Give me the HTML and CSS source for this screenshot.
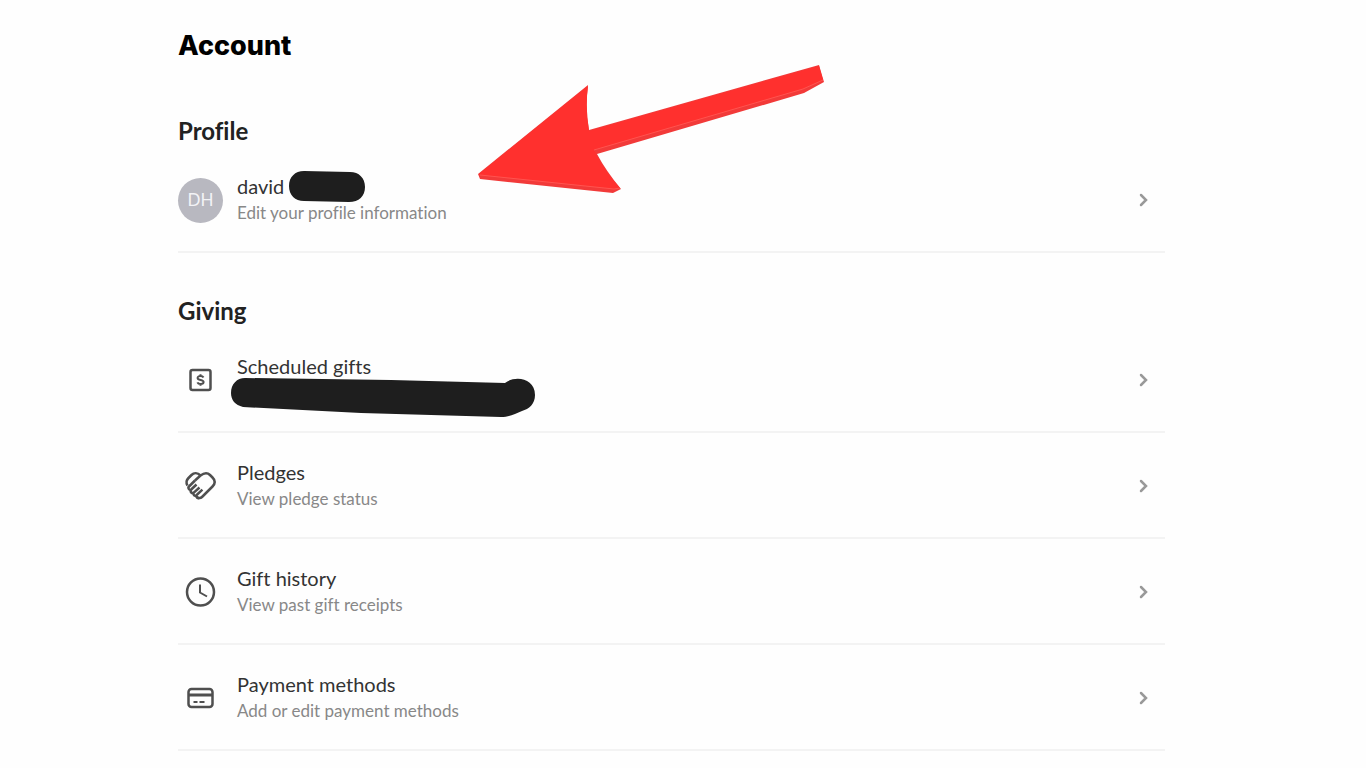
FILE: index.html
```html
<!DOCTYPE html>
<html lang="en">
<head>
    <meta charset="UTF-8">
    <meta name="viewport" content="width=device-width, initial-scale=1.0">
    <title>Account</title>
    <link rel="stylesheet" href="styles.css">
</head>
<body>
    <main class="account">
        <h1>Account</h1>

        <section class="group">
            <h2>Profile</h2>
            <a href="#profile" class="row">
                <span class="avatar">DH</span>
                <span class="row-text">
                    <span class="row-title">david
                        <svg class="redact-name" viewBox="0 0 76 32" fill="#1e1e1e" aria-hidden="true"><path d="M15 0 L61 1 C70 1 76 7 76 16 C76 25 70 31 60 31 L15 30 C6 30 0 24 0 15 C0 6 6 0 15 0Z"/></svg>
                    </span>
                    <span class="row-sub">Edit your profile information</span>
                </span>
                <svg class="chevron" viewBox="0 0 10 14" aria-hidden="true"><path d="M2 2l5 5-5 5"/></svg>
            </a>
        </section>

        <section class="group">
            <h2>Giving</h2>
            <a href="#scheduled" class="row">
                <svg class="icon" viewBox="0 0 32 32" aria-hidden="true">
                    <rect x="6" y="6" width="20" height="20" rx="2"/>
                    <path stroke-width="2" d="M19 13.5c-.5-1-1.600-1.500-3-1.500-1.700 0-2.900.7-2.900 1.900 0 2.900 6 1.300 6 4.200 0 1.200-1.300 2-3 2-1.500 0-2.700-.5-3.200-1.700M16 10.300V12M16 20v1.700"/>
                </svg>
                <span class="row-text">
                    <span class="row-title">Scheduled gifts</span>
                    <span class="row-sub">
                        <svg class="redact-gift" viewBox="0 0 304 40" fill="#1e1e1e" aria-hidden="true"><path d="M14 0 L160 2 L274 5 C284 -3 304 0 304 17 C304 26 298 31 291 33 C284 36 278 39 270 39 L130 35 L12 29 C4 27 0 22 0 15 C0 6 6 0 14 0Z"/></svg>
                    </span>
                </span>
                <svg class="chevron" viewBox="0 0 10 14" aria-hidden="true"><path d="M2 2l5 5-5 5"/></svg>
            </a>
            <a href="#pledges" class="row">
                <svg class="icon" viewBox="0 0 32 32" aria-hidden="true">
                    <path d="M16 5.500C13 2.500 9.500 2.500 7 5L4 8C1.500 10.500 1.500 13 3 15.500"/>
                    <path d="M10.500 10.500L16 5.500C19.500 2.800 23 2.500 25.500 5L28 7.500C31 10.500 31 13.500 28 16.500L17.500 27C15.500 29 12.500 28 12 26"/>
                    <path d="M10.500 10.500L4.500 16.500c-1.500 1.500.5 4.500 2.200 3L12 14.500M6.700 20c-1.400 1.800.8 4 2.600 2.600L15 17.500M9.300 22.600c-1.300 1.900.8 4 2.600 2.600l6-5.500M12 25.500c-.8 2 1.500 3.400 3 2"/>
                </svg>
                <span class="row-text">
                    <span class="row-title">Pledges</span>
                    <span class="row-sub">View pledge status</span>
                </span>
                <svg class="chevron" viewBox="0 0 10 14" aria-hidden="true"><path d="M2 2l5 5-5 5"/></svg>
            </a>
            <a href="#history" class="row">
                <svg class="icon" viewBox="0 0 32 32" aria-hidden="true">
                    <circle cx="16" cy="16" r="13.500"/>
                    <path stroke-width="2" d="M15.500 8.500V16.500l7 4"/>
                </svg>
                <span class="row-text">
                    <span class="row-title">Gift history</span>
                    <span class="row-sub">View past gift receipts</span>
                </span>
                <svg class="chevron" viewBox="0 0 10 14" aria-hidden="true"><path d="M2 2l5 5-5 5"/></svg>
            </a>
            <a href="#payment" class="row">
                <svg class="icon" viewBox="0 0 32 32" aria-hidden="true">
                    <rect x="4" y="7" width="24" height="18" rx="3"/>
                    <path stroke-width="3" d="M4 13h24"/>
                    <path stroke-width="2" d="M9 20h4M15 20h5"/>
                </svg>
                <span class="row-text">
                    <span class="row-title">Payment methods</span>
                    <span class="row-sub">Add or edit payment methods</span>
                </span>
                <svg class="chevron" viewBox="0 0 10 14" aria-hidden="true"><path d="M2 2l5 5-5 5"/></svg>
            </a>
        </section>

        <!-- Points at the profile row -->
        <svg class="arrow" viewBox="0 0 348 130" aria-hidden="true">
            <path fill="#f23a39" d="M0 109L110 20Q107 43 111 65L341 0L346 17L326 28L119 89Q128 106 143 124L135 128L2 114Z"/>
            <path fill="#ff302e" d="M1 109L110 21Q107 43 111 66L341 1L345 15L325 24L116 85Q126 106 142 123L136 124L2 110Z"/>
            <path fill="none" stroke="#ff5450" d="M2 110L136 124L142 123M116 85L325 24L345 15"/>
        </svg>
    </main>
</body>
</html>
```

FILE: styles.css
```css
* {
    box-sizing: border-box;
}

body {
    margin: 0;
    background-color: #fefefe;
    color: #333;
    font-family: Lato, "Liberation Sans", sans-serif;
    font-variant-ligatures: none;
}

.account {
    position: relative;
    margin: 0 201px 0 178px;
    padding-top: 26px;
}

h1 {
    margin: 0 0 50px;
    font-family: Inter, "Liberation Sans", sans-serif;
    font-size: 27px;
    line-height: 40px;
    font-weight: 800;
    color: #000;
}

h2 {
    margin: 0;
    padding-bottom: 1px;
    font-size: 24px;
    line-height: 30px;
    font-weight: 700;
    color: #222;
}

.group {
    margin-bottom: 43px;
}

.group:last-of-type {
    margin-bottom: 0;
}

.row {
    display: flex;
    align-items: center;
    gap: 14px;
    padding: 27px 16px 25px 0;
    border-bottom: 2px solid #f3f3f3;
    color: inherit;
    text-decoration: none;
}

.avatar {
    width: 45px;
    height: 45px;
    border-radius: 50%;
    background-color: #b8b8c0;
    color: #f3f3f6;
    font-size: 17px;
    line-height: 43px;
    text-align: center;
}

.icon {
    width: 45px;
    height: 32px;
    fill: none;
    stroke: #4f4f4f;
    stroke-width: 2.5;
}

.row-text {
    flex: 1;
}

.row-title,
.row-sub {
    position: relative;
    display: block;
    height: 26px;
    line-height: 26px;
}

.row-title {
    font-size: 20px;
    line-height: 24px;
}

.row-sub {
    font-size: 17px;
    color: #888;
}

.chevron {
    width: 10px;
    height: 14px;
    fill: none;
    stroke: #999;
    stroke-width: 2.5;
    stroke-linecap: round;
}

/* marker strokes over private details */
.redact-name {
    position: absolute;
    left: 52px;
    top: -3px;
    width: 76px;
    height: 32px;
}

.redact-gift {
    position: absolute;
    left: -6px;
    top: -2px;
    width: 304px;
    height: 40px;
}

.arrow {
    position: absolute;
    left: 300px;
    top: 65px;
    width: 348px;
    height: 130px;
    pointer-events: none;
}
```
